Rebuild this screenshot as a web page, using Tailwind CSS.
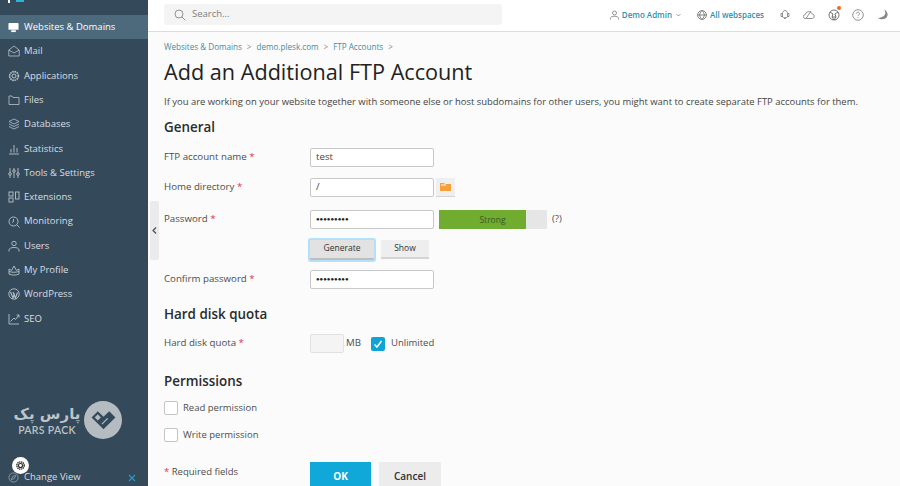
<!DOCTYPE html>
<html lang="en">
<head>
<meta charset="utf-8">
<script src="https://cdn.jsdelivr.net/npm/@tailwindcss/browser@4"></script>
<title>Add an Additional FTP Account</title>
</head>
<body class="w-[900px] h-[486px] overflow-hidden bg-[#fbfbfb] font-['Open_Sans',sans-serif] text-[#4d4d4d]">
<div class="flex h-[486px] relative">
  <!-- sidebar -->
  <aside class="w-[148px] shrink-0 h-full bg-[#34495a] text-[#d9dfe3] text-[9.5px] relative">
    <div class="h-[15px] relative">
      <span class="absolute left-[8px] top-0 w-[2px] h-[3px] bg-white"></span>
      <span class="absolute left-[16px] top-0 w-[8px] h-[2px] bg-[#29b6d8]"></span>
    </div>
    <nav class="flex flex-col">
      <a class="h-[24.3px] flex items-center gap-[5px] pl-[8px] bg-[#4d6a7d] text-white">
        <svg class="w-[11px] h-[11px] shrink-0" viewBox="0 0 12 12"><rect x="0.5" y="1" width="11" height="7.5" rx="1" fill="#fff"/><rect x="3.5" y="9" width="5" height="2" fill="#fff"/></svg>
        <span>Websites &amp; Domains</span></a>
      <a class="h-[24.3px] flex items-center gap-[4px] pl-[8px]">
        <svg class="w-[12px] h-[12px] shrink-0" viewBox="0 0 12 12" fill="none" stroke="#b9c4cb" stroke-width=".8"><path d="M.8 5 6 1l5.2 4v6H.8zM.8 5 6 8l5.2-3"/></svg><span>Mail</span></a>
      <a class="h-[24.3px] flex items-center gap-[4px] pl-[8px]">
        <svg class="w-[12px] h-[12px] shrink-0" viewBox="0 0 12 12" fill="none" stroke="#b9c4cb"><circle cx="6" cy="6" r="2"/><circle cx="6" cy="6" r="4.4" stroke-width="1.6" stroke-dasharray="1.6 .7"/></svg><span>Applications</span></a>
      <a class="h-[24.3px] flex items-center gap-[4px] pl-[8px]">
        <svg class="w-[12px] h-[12px] shrink-0" viewBox="0 0 12 12" fill="none" stroke="#b9c4cb" stroke-width=".8"><path d="M1 2h3l1 1.5h6V10.500H1z"/></svg><span>Files</span></a>
      <a class="h-[24.3px] flex items-center gap-[4px] pl-[8px]">
        <svg class="w-[12px] h-[12px] shrink-0" viewBox="0 0 12 12" fill="none" stroke="#b9c4cb" stroke-width=".8"><path d="M6 1l5 2.500-5 2.500-5-2.500zM1 6l5 2.500L11 6M1 8.500 6 11l5-2.500"/></svg><span>Databases</span></a>
      <a class="h-[24.3px] flex items-center gap-[4px] pl-[8px]">
        <svg class="w-[12px] h-[12px] shrink-0" viewBox="0 0 12 12" fill="none" stroke="#b9c4cb"><path d="M1 11h10M3 9.500V6M6 9.500V2M9 9.500V5" stroke-width=".9"/></svg><span>Statistics</span></a>
      <a class="h-[24.3px] flex items-center gap-[4px] pl-[8px]">
        <svg class="w-[12px] h-[12px] shrink-0" viewBox="0 0 12 12" fill="none" stroke="#b9c4cb" stroke-width=".9"><path d="M2 1v10M6 1v10M10 1v10"/><circle cx="2" cy="7" r="1.300" fill="#34495a"/><circle cx="6" cy="4" r="1.300" fill="#34495a"/><circle cx="10" cy="7" r="1.300" fill="#34495a"/></svg><span>Tools &amp; Settings</span></a>
      <a class="h-[24.3px] flex items-center gap-[4px] pl-[8px]">
        <svg class="w-[12px] h-[12px] shrink-0" viewBox="0 0 12 12" fill="none" stroke="#b9c4cb" stroke-width=".9"><rect x="1" y="1" width="4" height="4"/><rect x="1" y="7" width="4" height="4"/><rect x="7.500" y="1" width="3.500" height="7"/></svg><span>Extensions</span></a>
      <a class="h-[24.3px] flex items-center gap-[4px] pl-[8px]">
        <svg class="w-[12px] h-[12px] shrink-0" viewBox="0 0 12 12" fill="none" stroke="#b9c4cb" stroke-width=".9"><circle cx="5.500" cy="5.500" r="4.500"/><path d="M9 9l2.500 2.500M5.500 3v2.500l-1.500 1"/></svg><span>Monitoring</span></a>
      <a class="h-[24.3px] flex items-center gap-[4px] pl-[8px]">
        <svg class="w-[12px] h-[12px] shrink-0" viewBox="0 0 12 12" fill="none" stroke="#b9c4cb" stroke-width=".9"><circle cx="6" cy="3.500" r="2.200"/><path d="M1 11.500V10c0-1.500 2-2.500 5-2.500s5 1 5 2.500v1.500"/></svg><span>Users</span></a>
      <a class="h-[24.3px] flex items-center gap-[4px] pl-[8px]">
        <svg class="w-[12px] h-[12px] shrink-0" viewBox="0 0 12 12" fill="none" stroke="#b9c4cb" stroke-width=".9"><path d="M1 5l2.500 1.500L6 2l2.500 4.500L11 5v5c-3 1.500-7 1.500-10 0zM1 7.500c3 1 7 1 10 0"/></svg><span>My Profile</span></a>
      <a class="h-[24.3px] flex items-center gap-[4px] pl-[8px]">
        <svg class="w-[12px] h-[12px] shrink-0" viewBox="0 0 12 12" fill="none" stroke="#b9c4cb" stroke-width=".9"><circle cx="6" cy="6" r="5.200"/><path d="M2.500 4l2.500 6 1.500-4.500M5 4l2.500 6 2-5.500" stroke-width="1.100"/></svg><span>WordPress</span></a>
      <a class="h-[24.3px] flex items-center gap-[4px] pl-[8px]">
        <svg class="w-[12px] h-[12px] shrink-0" viewBox="0 0 12 12" fill="none" stroke="#b9c4cb" stroke-width=".9"><path d="M1 1v10h10M2.500 8.500 6 5l1.500 1.500L11 2M8.500 2H11v2.500"/></svg><span>SEO</span></a>
    </nav>
    <!-- logo -->
    <div class="absolute left-[17px] top-[401px] flex items-center gap-[7px]">
      <div class="flex flex-col items-center w-[60px] text-[#bcc4c9] leading-none whitespace-nowrap">
        <span class="font-['DejaVu_Sans'] font-bold text-[15px] leading-[20px] whitespace-nowrap" dir="rtl" lang="fa">پارس پک</span>
        <span class="text-[10.5px] leading-[12px] tracking-[0.3px] font-semibold uppercase font-['Lato'] whitespace-nowrap">Pars Pack</span>
      </div>
      <div class="w-[38px] h-[38px] rounded-full bg-[#b4bcc1] flex items-center justify-center">
        <svg class="w-[27px] h-[23px]" viewBox="0 0 26 22"><path d="M1.500 8 7.500 2 13 7.500 18.500 2 24.500 8 13 19.500z" fill="#34495a"/><path d="M7.500 5 4.500 8l3 3 3-3z" fill="#b4bcc1"/><path d="M13.500 7.500 8 13" stroke="#b4bcc1" stroke-width="1.200" transform="translate(3.500 1.500)"/></svg>
      </div>
    </div>
    <div class="absolute left-[12px] top-[457px] w-[17px] h-[17px] rounded-full bg-white flex items-center justify-center">
      <svg class="w-[11px] h-[11px]" viewBox="0 0 12 12" fill="none" stroke="#2b2b2b"><circle cx="6" cy="6" r="2.200" stroke-width="1.200"/><circle cx="6" cy="6" r="4" stroke-width="1.500" stroke-dasharray="1.500 .6"/></svg>
    </div>
    <div class="absolute left-[8px] right-0 top-[470px] h-[14px] flex items-center gap-[5px]">
      <svg class="w-[11px] h-[11px]" viewBox="0 0 12 12" fill="none" stroke="#95a3ad" stroke-width=".9"><circle cx="6" cy="6" r="5"/><path d="M8.500 3.500 7 7 3.500 8.500 5 5z"/></svg>
      <span class="text-[#d9dfe3]">Change View</span>
      <svg class="absolute left-[120px] top-[4px] w-[8px] h-[8px]" viewBox="0 0 8 8" stroke="#2b9ac9" stroke-width="1.200"><path d="M1 1l6 6M7 1 1 7"/></svg>
    </div>
  </aside>

  <!-- collapse handle -->
  <button class="absolute left-[150px] top-[201px] w-[9px] h-[59px] bg-[#ebebeb] rounded-[2px] flex items-center justify-center">
    <svg class="w-[5px] h-[7px]" viewBox="0 0 5 7" fill="none" stroke="#444" stroke-width="1.100"><path d="M4 .5 1 3.500l3 3"/></svg>
  </button>

  <div class="flex-1 min-w-0">
    <!-- top bar -->
    <header class="h-[32px] bg-white border-b border-[#dcdcdc] flex items-start relative">
      <div class="ml-[16px] mt-[4px] w-[338px] h-[21px] rounded-[3px] bg-[#f4f4f4] flex items-center pl-[10px] gap-[6px] text-[9.5px] text-[#7d7d7d]">
        <svg class="w-[12px] h-[12px]" viewBox="0 0 12 12" fill="none" stroke="#888" stroke-width=".9"><circle cx="5" cy="5" r="4"/><path d="M8 8l3.300 3.300"/></svg>
        Search...
      </div>
      <div class="ml-auto mr-[12px] mt-[4px] h-[21px] flex items-center text-[8px] font-semibold text-[#2b91af]">
        <svg class="w-[9px] h-[10px] mr-[3px]" viewBox="0 0 9 10" fill="none" stroke="#777" stroke-width=".8"><circle cx="4.500" cy="3" r="2"/><path d="M.5 9.500V8.500c0-1.500 1.500-2.200 4-2.200s4 .7 4 2.200v1"/></svg>
        <span>Demo Admin</span>
        <svg class="w-[5px] h-[4px] ml-[4px]" viewBox="0 0 5 4" fill="none" stroke="#777" stroke-width=".7"><path d="M.5 1l2 2 2-2"/></svg>
        <svg class="w-[10px] h-[10px] ml-[16px] mr-[3px]" viewBox="0 0 10 10" fill="none" stroke="#666" stroke-width=".8"><circle cx="5" cy="5" r="4.400"/><path d="M.6 5h8.800M5 .6c-3 3-3 5.800 0 8.800M5 .6c3 3 3 5.800 0 8.800"/></svg>
        <span>All webspaces</span>
        <svg class="w-[12px] h-[11px] ml-[15px]" viewBox="0 0 12 11" fill="none" stroke="#777" stroke-width=".8"><path d="M3.500 8V4.500C3.500 3 4.500 1.500 6 1.500S8.500 3 8.500 4.500V8c-1.500 1-3.500 1-5 0zM3.500 4.500H2v3h1.500M8.500 4.500H10v3H8.500M5 9.500h2"/></svg>
        <svg class="w-[12px] h-[10px] ml-[12px]" viewBox="0 0 12 10" fill="none" stroke="#777" stroke-width=".8"><path d="M3 8.500H2.500a2 2 0 0 1-.2-4A3.500 3.500 0 0 1 9 3.800a2.400 2.400 0 0 1 .5 4.700H3zM8 1 3 8.500"/></svg>
        <div class="relative ml-[13px]">
          <svg class="w-[12px] h-[12px] block" viewBox="0 0 12 12" fill="none" stroke="#666" stroke-width=".9"><circle cx="6" cy="6" r="5"/><path d="M2 3l3 2-1 3h4l-1-3 3-2M4 8l2 3 2-3" /></svg>
          <span class="absolute left-[9px] top-[-3px] w-[4px] h-[4px] rounded-full bg-[#f26722]"></span>
        </div>
        <svg class="w-[12px] h-[12px] ml-[12px]" viewBox="0 0 12 12" fill="none" stroke="#777" stroke-width=".8"><circle cx="6" cy="6" r="5.300"/><path d="M4.500 4.700C4.500 3.700 5.200 3.200 6 3.200s1.500.5 1.500 1.400c0 1.300-1.500 1.300-1.500 2.500M6 8.200v1"/></svg>
        <svg class="w-[11px] h-[11px] ml-[13px]" viewBox="0 0 11 11" fill="#888"><path d="M7 .5c3 3.500 1 8-6 8.500 3 2.500 8.500 1.500 9.500-2.500C11 4 9.500 1.500 7 .5z"/></svg>
      </div>
    </header>

    <!-- content -->
    <main class="pl-[16px] pr-[10px] pt-[9px]">
      <nav class="h-[12px] flex items-center gap-[5px] text-[8.1px] leading-[12px] text-[#3f8ea3]">
        <span>Websites &amp; Domains</span><span class="text-[#888]">&gt;</span>
        <span>demo.plesk.com</span><span class="text-[#888]">&gt;</span>
        <span>FTP Accounts</span><span class="text-[#888]">&gt;</span>
      </nav>
      <h1 class="mt-[2px] h-[33px] text-[21.65px] leading-[33px] text-[#222] whitespace-nowrap">Add an Additional FTP Account</h1>
      <p class="mt-[6px] h-[16px] text-[9.45px] leading-[16px] text-[#444] whitespace-nowrap">If you are working on your website together with someone else or host subdomains for other users, you might want to create separate FTP accounts for them.</p>

      <h2 class="mt-[8px] h-[18px] text-[13.4px] leading-[18px] font-semibold text-[#2b2b2b]">General</h2>

      <div class="mt-[12px] h-[19px] flex items-center text-[9.7px]">
        <label class="w-[146px]">FTP account name <span class="text-[#d9324f]">*</span></label>
        <div class="w-[124px] h-[19px] bg-white border border-[#c8c8c8] rounded-[2px] pl-[5px] flex items-center text-[#444]">test</div>
      </div>
      <div class="mt-[11px] h-[19px] flex items-center text-[9.7px]">
        <label class="w-[146px]">Home directory <span class="text-[#d9324f]">*</span></label>
        <div class="w-[124px] h-[19px] bg-white border border-[#c8c8c8] rounded-[2px] pl-[5px] flex items-center text-[#444]">/</div>
        <div class="ml-[2px] w-[19px] h-[19px] bg-[#efefef] border-b border-[#d4d4d4] flex items-center justify-center">
          <svg class="w-[11px] h-[10px]" viewBox="0 0 11 10"><path d="M0 1h4l1 1h6v7H0z" fill="#f6a03c"/><rect x="1" y="2.500" width="5" height="1" fill="#fff"/></svg>
        </div>
      </div>
      <div class="mt-[13px] h-[19px] flex items-center text-[9.7px]">
        <label class="w-[146px]">Password <span class="text-[#d9324f]">*</span></label>
        <div class="w-[124px] h-[19px] bg-white border border-[#c8c8c8] rounded-[2px] pl-[5px] flex items-center text-[#222] text-[6px]">●●●●●●●●●</div>
        <div class="ml-[5px] w-[108px] h-[19px] bg-[#e6e6e6] relative text-[8.5px]">
          <div class="w-[87px] h-full bg-[#6fac2f] pl-[20px] text-center leading-[19px] text-[#3a5a20]">Strong</div>
        </div>
        <span class="ml-[5px] text-[9.5px]">(?)</span>
      </div>
      <div class="mt-[10px] h-[21px] flex items-center pl-[146px] text-[8.5px] text-[#333]">
        <button class="w-[64px] h-[20px] bg-[#e2e2e2] border-b-2 border-[#bdbdbd] rounded-[1px] outline-2 outline-[#b4e0fa]">Generate</button>
        <button class="ml-[7px] w-[48px] h-[19px] bg-[#eeeeee] border-b-2 border-[#d4d4d4]">Show</button>
      </div>
      <div class="mt-[10px] h-[19px] flex items-center text-[9.7px]">
        <label class="w-[146px]">Confirm password <span class="text-[#d9324f]">*</span></label>
        <div class="w-[124px] h-[19px] bg-white border border-[#c8c8c8] rounded-[2px] pl-[5px] flex items-center text-[#222] text-[6px]">●●●●●●●●●</div>
      </div>

      <h2 class="mt-[16px] h-[18px] text-[13.4px] leading-[18px] font-semibold text-[#2b2b2b]">Hard disk quota</h2>
      <div class="mt-[11px] h-[19px] flex items-center text-[9.7px]">
        <label class="w-[146px]">Hard disk quota <span class="text-[#d9324f]">*</span></label>
        <div class="w-[34px] h-[19px] bg-[#f4f4f4] border border-[#e2e2e2] rounded-[2px]"></div>
        <span class="ml-[2px]">MB</span>
        <span class="ml-[10px] w-[14px] h-[14px] rounded-[2px] bg-[#0fa3d6] flex items-center justify-center">
          <svg class="w-[10px] h-[10px]" viewBox="0 0 10 10" fill="none" stroke="#fff" stroke-width="1.500"><path d="M1.500 5.500 4 8l4.500-6"/></svg>
        </span>
        <span class="ml-[6px] text-[9.5px]">Unlimited</span>
      </div>

      <h2 class="mt-[19px] h-[18px] text-[13.4px] leading-[18px] font-semibold text-[#2b2b2b]">Permissions</h2>
      <div class="mt-[11px] h-[14px] flex items-center text-[9.5px]">
        <span class="w-[14px] h-[14px] bg-white border border-[#c4c4c4] rounded-[2px]"></span>
        <span class="ml-[5px]">Read permission</span>
      </div>
      <div class="mt-[13px] h-[14px] flex items-center text-[9.5px]">
        <span class="w-[14px] h-[14px] bg-white border border-[#c4c4c4] rounded-[2px]"></span>
        <span class="ml-[5px]">Write permission</span>
      </div>
      <div class="mt-[20px] flex items-start text-[9.5px]">
        <span class="w-[146px] mt-[3px]"><span class="text-[#d9324f]">*</span> Required fields</span>
        <button class="w-[61px] h-[28px] bg-[#0fa8d9] text-white font-bold text-[10px]">OK</button>
        <button class="ml-[8px] w-[62px] h-[28px] bg-[#ececec] text-[#333] font-semibold text-[10px]">Cancel</button>
      </div>
    </main>
  </div>
</div>
</body>
</html>
